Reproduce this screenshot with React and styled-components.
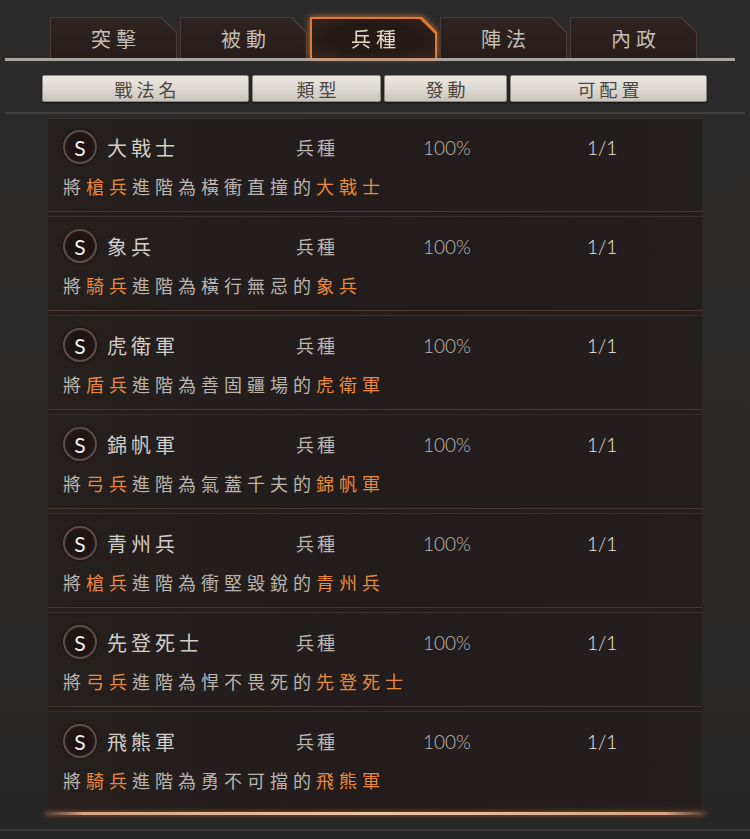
import React from 'react';
import styled, { createGlobalStyle, css } from 'styled-components';

const GlobalStyle = createGlobalStyle`
  html, body {
    margin: 0;
    padding: 0;
    background: #2a2929;
  }
  * { box-sizing: border-box; }
`;

const CJK = `"Noto Sans CJK TC", "Noto Sans CJK SC", sans-serif`;

const Page = styled.div`
  width: 750px;
  height: 839px;
  overflow: hidden;
  background: linear-gradient(180deg, #2c2b2b 0%, #2a2928 60%, #272626 100%);
  font-family: ${CJK};
  display: flex;
  flex-direction: column;
`;

const TabStrip = styled.div`
  display: flex;
  gap: 3px;
  margin: 17px 15px 0 5px;
  padding-left: 45px;
  border-bottom: 3px solid #a9a5a0;
`;

const chamfer = 'polygon(0 0, calc(100% - 15px) 0, 100% 15px, 100% 100%, 0 100%)';

// outer shape acts as the border, inner shape is the fill
const Tab = styled.div`
  width: 127px;
  height: 41px;
  ${p => p.$active && css`
    filter: drop-shadow(0 0 3px rgba(240, 130, 50, 0.85));
  `}
`;

const TabShape = styled.div`
  height: 100%;
  clip-path: ${chamfer};
  background: ${p => (p.$active ? '#e07a33' : '#4a3c38')};
  padding: ${p => (p.$active ? '2px 2px 0 2px' : '1px 1px 0 1px')};
`;

const TabInner = styled.div`
  height: 100%;
  display: flex;
  align-items: center;
  justify-content: center;
  clip-path: ${chamfer};
  background: linear-gradient(180deg, #2e2421 0%, #261d1b 100%);
  color: #c4bdb5;
  font-size: 20px;
  letter-spacing: 5px;
  padding-left: 5px;
  ${p => p.$active && css`
    color: #e6dbc2;
    background: radial-gradient(ellipse at center, #231a17 55%, #3a2519 100%);
  `}
`;

const HeaderBar = styled.div`
  display: flex;
  gap: 3px;
  margin-top: 14px;
  padding-left: 42px;
  height: 27px;
`;

const HeaderCell = styled.div`
  width: ${p => p.$w}px;
  height: 27px;
  display: flex;
  align-items: center;
  justify-content: center;
  background: linear-gradient(180deg, #ebe8e1 0%, #dcd8d0 55%, #c9c5bd 100%);
  border: 1px solid #8e8a84;
  border-radius: 2px;
  box-shadow: 0 1px 2px rgba(0, 0, 0, 0.6);
  color: #4a4640;
  font-size: 18px;
  letter-spacing: 4px;
  padding-left: 4px;
`;

const Divider = styled.div`
  margin: 10px 5px 0 5px;
  height: 2px;
  background: #434140;
`;

const List = styled.div`
  margin: 4px 48px 0 48px;
  border-top: 1px solid #383331;
  background: linear-gradient(90deg, #251f1e 0%, #221d1c 50%, #241f1e 100%);
  display: flex;
  flex-direction: column;
`;

const Row = styled.div`
  height: 99px;
  display: flex;
  flex-direction: column;
  padding-top: 11px;
`;

const MainLine = styled.div`
  display: grid;
  grid-template-columns: 233px 127px 164px 1fr;
  align-items: center;
  height: 34px;
  padding-left: 15px;
`;

const NameCell = styled.div`
  display: flex;
  align-items: center;
  gap: 10px;
`;

const Badge = styled.div`
  width: 34px;
  height: 34px;
  border-radius: 50%;
  border: 2px solid #5e4e49;
  background: radial-gradient(circle, #1a1212 0%, #201716 70%, #2c2220 100%);
  box-shadow: 0 0 3px rgba(0, 0, 0, 0.6);
  display: flex;
  align-items: center;
  justify-content: center;
  color: #f2eeea;
  font-family: "Lato", "Noto Sans", sans-serif;
  font-size: 21px;
  line-height: 1;
`;

const Name = styled.span`
  color: #d3cec7;
  font-size: 20px;
  letter-spacing: 4px;
`;

const TypeCell = styled.span`
  color: #bcb7b0;
  font-size: 18px;
  letter-spacing: 3px;
`;

const NumCell = styled.span`
  font-family: "Lato", "Noto Sans", sans-serif;
  font-weight: 300;
  font-size: 19px;
  color: ${p => (p.$bright ? '#eeeae4' : '#bdb8b2')};
`;

const Desc = styled.div`
  margin-top: 10px;
  padding-left: 15px;
  height: 24px;
  line-height: 24px;
  font-size: 18px;
  letter-spacing: 5px;
  color: #bab5ae;
  white-space: nowrap;
`;

const Hi = styled.span`
  color: #e8893e;
`;

const Separator = styled.div`
  margin-top: auto;
  margin-bottom: 1px;
  height: 6px;
  border-top: 1px solid #4a3632;
  border-bottom: 1px solid #34302f;
`;

const GlowLine = styled.div`
  margin: 0 45px 0 45px;
  height: 3px;
  border-radius: 2px;
  background: linear-gradient(90deg, rgba(200, 130, 90, 0.2) 0%, #d9a483 6%, #efc7a8 50%, #d9a483 94%, rgba(200, 130, 90, 0.2) 100%);
  box-shadow: 0 0 5px rgba(220, 120, 60, 0.7);
`;

const BottomEdge = styled.div`
  margin-top: 14px;
  height: 2px;
  background: #3f3d3c;
`;

const tabs = ['突擊', '被動', '兵種', '陣法', '內政'];

const headers = [
  { label: '戰法名', w: 207 },
  { label: '類型', w: 129 },
  { label: '發動', w: 123 },
  { label: '可配置', w: 197 },
];

const troops = [
  { name: '大戟士', unit: '槍兵', adj: '橫衝直撞' },
  { name: '象兵', unit: '騎兵', adj: '橫行無忌' },
  { name: '虎衛軍', unit: '盾兵', adj: '善固疆場' },
  { name: '錦帆軍', unit: '弓兵', adj: '氣蓋千夫' },
  { name: '青州兵', unit: '槍兵', adj: '衝堅毀銳' },
  { name: '先登死士', unit: '弓兵', adj: '悍不畏死' },
  { name: '飛熊軍', unit: '騎兵', adj: '勇不可擋' },
];

const App = () => {
  return (
    <Page>
      <GlobalStyle />
      <TabStrip>
        {tabs.map(t => {
          const active = t === '兵種';
          return (
            <Tab key={t} $active={active}>
              <TabShape $active={active}>
                <TabInner $active={active}>{t}</TabInner>
              </TabShape>
            </Tab>
          );
        })}
      </TabStrip>

      <HeaderBar>
        {headers.map(h => (
          <HeaderCell key={h.label} $w={h.w}>{h.label}</HeaderCell>
        ))}
      </HeaderBar>

      <Divider />

      <List>
        {troops.map((t, i) => (
          <Row key={t.name}>
            <MainLine>
              <NameCell>
                <Badge>S</Badge>
                <Name>{t.name}</Name>
              </NameCell>
              <TypeCell>兵種</TypeCell>
              <NumCell>100%</NumCell>
              <NumCell $bright>1/1</NumCell>
            </MainLine>
            <Desc>
              將<Hi>{t.unit}</Hi>進階為{t.adj}的<Hi>{t.name}</Hi>
            </Desc>
            {i < troops.length - 1 && <Separator />}
          </Row>
        ))}
      </List>

      <GlowLine />
      <BottomEdge />
    </Page>
  );
};

export default App;
